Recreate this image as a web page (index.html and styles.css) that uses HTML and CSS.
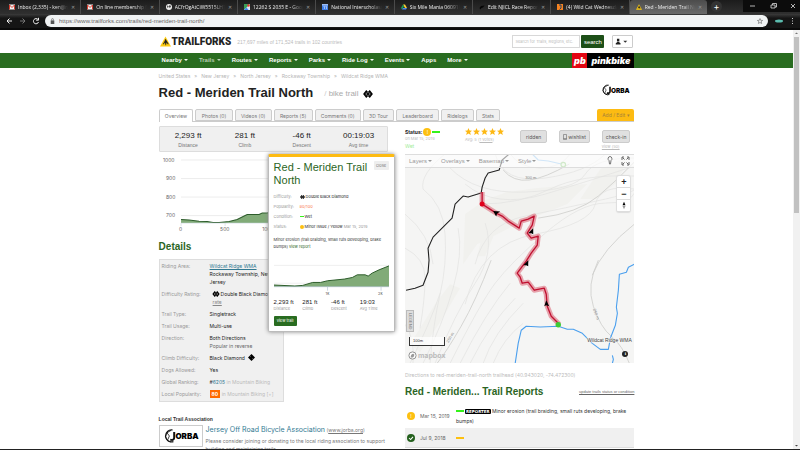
FILE: index.html
```html
<!DOCTYPE html>
<html lang="en">
<head>
<meta charset="utf-8">
<title>Red - Meriden Trail North</title>
<link rel="stylesheet" href="styles.css">
</head>
<body>
<svg class="defs" aria-hidden="true">
  <symbol id="dbl" viewBox="0 0 22 18"><path d="M7 0l4 4 4-4 7 9-7 9-4-4-4 4-7-9z" fill="#000"/><path d="M7 6v6M15 6v6M11 4v3M11 11v3" stroke="#fff" stroke-width="1.3"/></symbol>
  <symbol id="warn" viewBox="0 0 20 20"><path d="M10 1L20 19H0z" fill="#fc1"/><path d="M10 5l-2 5-3 5h2l2-3 1 5h1l1-5 2 3h2l-3-5z" fill="#222"/></symbol>
  <symbol id="mail" viewBox="0 0 12 10"><path d="M0 0h12v10H0z" fill="#f2f2f2"/><path d="M1 10V1l5 5 5-5v9" fill="none" stroke="#d33a2c" stroke-width="2"/></symbol>
  <symbol id="star" viewBox="0 0 20 20"><path d="M10 0l3 7 7 .6-5.300 4.800L16.500 20 10 16l-6.500 4 1.800-7.600L0 7.600 7 7z" fill="#fdb813"/></symbol>
  <symbol id="jorba" viewBox="0 0 90 36"><path d="M24 3A15 15 0 1 0 26 32" fill="none" stroke="#111" stroke-width="3"/><path d="M20 4L10 10 6 20l5 9 9 4M10 10l6 8-5 11" fill="none" stroke="#111" stroke-width="2"/><path d="M28 8v14q0 8-10 5" fill="none" stroke="#111" stroke-width="5"/><text x="31" y="26" class="jorba-text">ORBA</text></symbol>
</svg>

<header class="chrome">
  <div class="tabstrip">
    <div class="btabs">
      <div class="btab"><svg class="fav"><use href="#mail"/></svg><span>Inbox (2,335) - ken@njicl</span><i>✕</i></div>
      <div class="btab"><svg class="fav"><use href="#mail"/></svg><span>On line membership form</span><i>✕</i></div>
      <div class="btab"><svg class="fav" viewBox="0 0 12 12"><circle cx="6" cy="6" r="6" fill="#eee"/><path d="M2 3l3 1v2L3 8M7 2l3 2-2 4-2-2" fill="#333"/></svg><span>ACfrOgAtCiW5515LH1jz</span><i>✕</i></div>
      <div class="btab"><svg class="fav" viewBox="0 0 12 12"><path d="M0 0h12v12H0z" fill="#3a9e56"/><path d="M0 12L12 0v12z" fill="#dfe6ee"/><path d="M0 12l5-5 4 5z" fill="#4285f4"/><circle cx="9" cy="3" r="2.500" fill="#e33"/></svg><span>12262 S 2035 E - Google</span><i>✕</i></div>
      <div class="btab"><svg class="fav" viewBox="0 0 12 12"><path d="M0 0h12v12H0z" fill="#3f7ee8"/><path d="M0 0h12v3H0z" fill="#9dbdf5"/><path d="M3 5h2v5M7 5h2v5" stroke="#fff" fill="none"/></svg><span>National Interscholastic</span><i>✕</i></div>
      <div class="btab"><svg class="fav" viewBox="0 0 12 12"><path d="M4 1h4l4 7H8z" fill="#fc3"/><path d="M4 1l2 3.500L2 11 0 8z" fill="#1a9f5a"/><path d="M4 8h8l-2 3H2z" fill="#4a87ee"/></svg><span>Six Mile Mania 060919</span><i>✕</i></div>
      <div class="btab"><svg class="fav" viewBox="0 0 12 12"><path d="M1 8l3-4 7-1-3 4-3 1-2 3z" fill="#050505"/></svg><span>Edit NJICL Race Report</span><i>✕</i></div>
      <div class="btab"><svg class="fav" viewBox="0 0 12 12"><path d="M0 0h12v12H0z" fill="#f58220"/><path d="M4 2h4v6l-3 3" stroke="#246" stroke-width="2" fill="none"/></svg><span>(4) Wild Cat Wednesday</span><i>✕</i></div>
      <div class="btab active"><svg class="fav"><use href="#warn"/></svg><span>Red - Meriden Trail North</span><i>✕</i></div>
    </div>
    <button class="newtab" aria-label="New tab">+</button>
    <div class="winctl">
      <svg viewBox="0 0 57 12"><path d="M7 6h5M28 5h4v3h-4zM29.500 5V3.500h4v3.500h-1.500M48 4l4 4M52 4l-4 4" fill="none" stroke="#ddd" stroke-width=".8"/></svg>
    </div>
  </div>
  <div class="toolbar">
    <svg class="arrows" viewBox="0 0 45 14"><g fill="none" stroke="#eee"><path d="M12 7H7M9.500 4.500L7 7l2.500 2.500"/><path d="M20 7h5M22.500 4.500L25 7l-2.500 2.500" stroke="#777"/><path d="M38 5.500A2.600 2.600 0 1 0 38.500 8M38.500 3.800V6.200h-2.400"/></g></svg>
    <div class="omni">
      <svg class="lock" viewBox="0 0 8 10"><path d="M1 4h6v6H1z" fill="#555"/><path d="M2.500 4V2.500q0-1.500 1.500-1.500t1.500 1.500V4" fill="none" stroke="#555"/></svg>
      <input class="url" aria-label="Address" value="https://www.trailforks.com/trails/red-meriden-trail-north/">
      <svg class="fave" viewBox="-1 -1 22 22"><path d="M10 1l2.500 6.500 7 .5-5.300 4.500L16 19l-6-3.500L4 19l1.800-6.500L.5 8l7-.5z" fill="none" stroke="#555" stroke-width="2"/></svg>
    </div>
    <svg class="ext" viewBox="0 0 32 14"><ellipse cx="11" cy="7" rx="4" ry="1.500" fill="#5bbcae"/><path d="M24 4h1v1h-1zM24 6.500h1v1h-1zM24 9h1v1h-1z" fill="#ccc"/></svg>
  </div>
</header>

<div class="frame">
<div class="page">
  <div class="wrap head">
    <a class="brand" href="#"><svg><use href="#warn"/></svg><b>TRAILFORKS</b></a>
    <span class="tagline">217,697 miles of 171,524 trails in 102 countries</span>
    <form class="search">
      <input aria-label="Search" placeholder="Search for Trails, Regions, etc.">
      <button type="button">search</button>
    </form>
    <button class="user" aria-label="Account"><svg viewBox="0 0 24 10"><path d="M5 1h3v3.500H5zM3.500 8V6.500l2-1.500h2l2 1.500V8z" fill="#222"/><path d="M13 3.500h5L15.500 6z" fill="#333"/></svg></button>
  </div>

  <nav class="mainnav">
    <div class="wrap">
      <a class="car" href="#">Nearby</a><a class="car dim" href="#">Trails</a><a class="car" href="#">Routes</a><a class="car" href="#">Reports</a><a class="car" href="#">Parks</a><a class="car" href="#">Ride Log</a><a class="car" href="#">Events</a><a href="#">Apps</a><a class="car" href="#">More</a>
      <span class="pink"><b class="pb">pb</b><b class="pinkbike">pinkbike</b></span>
    </div>
  </nav>

  <main class="wrap">
    <div class="crumbs"><a href="#">United States</a><i>»</i><a href="#">New Jersey</a><i>»</i><a href="#">North Jersey</a><i>»</i><a href="#">Rockaway Township</a><i>»</i><a href="#">Wildcat Ridge WMA</a></div>
    <div class="titlebar">
      <h1>Red - Meriden Trail North</h1><small><i>/</i> bike trail</small><svg class="diamond"><use href="#dbl"/></svg>
      <svg class="assoc-logo"><use href="#jorba"/></svg>
    </div>
    <div class="tabs">
      <a class="on" href="#">Overview</a><a href="#">Photos (0)</a><a href="#">Videos (0)</a><a href="#">Reports (5)</a><a href="#">Comments (0)</a><a href="#">3D Tour</a><a href="#">Leaderboard</a><a href="#">Ridelogs</a><a href="#">Stats</a>
      <button class="edit">Add / Edit ▾</button>
    </div>

    <div class="cols">
      <section class="left">
        <div class="stats">
          <div><b>2,293 ft</b>Distance</div><div><b>281 ft</b>Climb</div><div><b>-46 ft</b>Descent</div><div><b>00:19:03</b>Avg time</div>
        </div>
        <svg class="chart" viewBox="0 0 229 80">
          <path d="M22 8h207M22 26.500h207M22 45h207M22 63.500h207" stroke="#e4e4e4" stroke-width=".7"/>
          <path d="M22 67.500L30 68l10 1.200 8 .2 6 1h6l10-1 8-2 6-3 4-2h12l3-1.500h5l3-1h8l20-5 20-6 40-10v32H22z" fill="#81ab78"/>
          <path d="M22 67.500L30 68l10 1.200 8 .2 6 1h6l10-1 8-2 6-3 4-2h12l3-1.500h5l3-1h8l20-5 20-6 40-10" fill="none" stroke="#2d5c2b"/>
          <path d="M22 71h207M22 71v3M66 71v3M110 71v3" stroke="#cdd6e0" stroke-width=".6" fill="none"/>
          <g class="axis"><text x="4" y="10">1000</text><text x="7" y="28">900</text><text x="7" y="47">800</text><text x="7" y="65">700</text><text x="20" y="79">0</text><text x="61" y="79">500</text><text x="103" y="79">1000</text></g>
        </svg>

        <h2>Details</h2>
        <dl class="details">
          <dt>Riding Area:</dt><dd><a class="u" href="#">Wildcat Ridge WMA</a><br>Rockaway Township, New Jersey</dd>
          <dt>Difficulty Rating:</dt><dd><svg class="ico"><use href="#dbl"/></svg>Double Black Diamond<br><a class="rate" href="#">rate</a></dd>
          <dt>Trail Type:</dt><dd>Singletrack</dd>
          <dt>Trail Usage:</dt><dd>Multi-use</dd>
          <dt>Direction:</dt><dd>Both Directions<br><span class="soft">Popular in reverse</span></dd>
          <dt>Climb Difficulty:</dt><dd>Black Diamond <svg class="ico one" viewBox="0 0 14 14"><path d="M7 0l7 7-7 7-7-7z"/><path d="M5 5h1M8 9h1" stroke="#fff"/></svg></dd>
          <dt>Dogs Allowed:</dt><dd>Yes</dd>
          <dt>Global Ranking:</dt><dd>#<a class="rank" href="#">6205</a> <span class="faint">in Mountain Biking</span></dd>
          <dt>Local Popularity:</dt><dd><b class="pop">80</b> <span class="faint">in Mountain Biking [+]</span></dd>
        </dl>

        <h3>Local Trail Association</h3>
        <div class="assoc">
          <div class="card"><svg><use href="#jorba"/></svg></div>
          <div><a class="name" href="#">Jersey Off Road Bicycle Association</a> <span class="site">(<a href="#">www.jorba.org</a>)</span>
          <p>Please consider joining or donating to the local riding association to support building and maintaining trails.</p></div>
        </div>

        <aside class="popup">
          <button class="close">close</button>
          <h2>Red - Meriden Trail North</h2>
          <dl>
            <dt>Difficulty:</dt><dd><svg class="ico"><use href="#dbl"/></svg>Double Black Diamond</dd>
            <dt>Popularity:</dt><dd class="orange">80/100</dd>
            <dt>Condition:</dt><dd><i class="bar green"></i>Wet</dd>
            <dt>Status:</dt><dd><i class="dot"></i>Minor Issue / Yellow <span>Mar 15, 2019</span></dd>
          </dl>
          <p>Minor erosion (trail braiding, small ruts developing, brake bumps) <a href="#">view report</a></p>
          <svg class="mini" viewBox="0 0 116 42">
            <path d="M0 11.500h116M0 29.500h116" stroke="#e8e8e8" stroke-width=".7"/>
            <path d="M0 31.300L21 32.300 29 31.700 39 28.700H47L54 27 71 25.300 79 23.700 84 21H92L95 22.300 99 19.300 106 16 116 12V33H0z" fill="#81ab78"/>
            <path d="M0 31.300L21 32.300 29 31.700 39 28.700H47L54 27 71 25.300 79 23.700 84 21H92L95 22.300 99 19.300 106 16 116 12" fill="none" stroke="#2d5c2b"/>
            <path d="M0 33h116M54 33v4M108 33v4" stroke="#a9bccd" stroke-width=".6" fill="none"/>
            <text x="52" y="41">1k</text><text x="105" y="41">2k</text>
          </svg>
          <div class="pstats"><div><b>2,293 ft</b>Distance</div><div><b>281 ft</b>Climb</div><div><b>-46 ft</b>Descent</div><div><b>19:03</b>Avg Time</div></div>
          <button class="view">view trail</button>
        </aside>
      </section>

      <section class="right">
        <div class="status">
          <div class="st"><div class="sline"><b>Status:</b><i class="dot">!</i><i class="bar green"></i></div><span>on Mar 15, 2019</span><em>Wet</em></div>
          <div class="rating"><div class="stars"><svg><use href="#star"/></svg><svg><use href="#star"/></svg><svg><use href="#star"/></svg><svg><use href="#star"/></svg><svg><use href="#star"/></svg></div><span>Avg: 5 (<a href="#">1 votes</a>)</span></div>
          <div class="acts">
            <button>ridden</button>
            <button><svg viewBox="0 0 8 12"><path d="M1 1h6v10H1zM1 9h6" fill="none" stroke="#555"/></svg>wishlist</button>
            <div><button>check-in</button><a href="#">view (50)</a></div>
          </div>
        </div>

        <div class="map">
          <svg class="canvas" viewBox="0 0 229 209">
            <rect width="229" height="209" fill="#f5f5f4"/>
            <g fill="#f1f1ee"><path d="M60 60l20-14 22-8 30-4 50-4-20 20-50 20-40 20-14 20zM175 45l20-30 28-13-10 25-22 18zM5 190l25-40 15-20 10 4-20 34-20 30zM78 78l12 0-10 24-8 0z"/></g>
            <g fill="none" stroke="#e3e3e1" stroke-width=".7">
              <path d="M40 0Q15 20 18 35q20 15 22 45t-5 60-10 69"/>
              <path d="M45 14Q70 40 120 38T180 20 229 4M60 30q30 25 80 10T229 12M75 50q40 0 70-15T229 22"/>
              <path d="M70 110q10-40 50-48T200 45 229 30M60 150q15-60 70-70t60-30 39-15M45 209q30-60 45-80t50-50 60-30 29-10"/>
              <path d="M55 209q25-50 50-80M65 209q20-40 45-65M78 209q10-30 40-60M88 209q10-25 30-40M30 209q20-50 40-80t10-60M18 209q20-40 30-75t5-60M5 209q20-40 30-70"/>
              <path d="M105 0q10 14 30 14t30-14M90 0q8 30 50 24T200 0M0 94q20 10 20 30t-5 50M0 60q25 20 28 50M0 170q10 14 8 39"/>
            </g>
            <g fill="none" stroke="#cdcdcb" stroke-width=".8">
              <path d="M98 16q10 12 26 10t40-16M133 64q40-5 60-22t36-34M187 121q10-26 42-51M193 106q-12 25-5 46t18 30 18 27M86 106q-15 40-30 66T32 209"/>
            </g>
            <g class="contour"><text x="120" y="25">300 m</text><text transform="rotate(-60 45 186)" x="42" y="186">250 m</text><text transform="rotate(70 188 156)" x="187" y="156">250 m</text></g>
            <g fill="none" stroke="#4a9fee" stroke-width="1.100" stroke-linejoin="round">
              <path d="M110 209l3-20 3-13 5-4 14 .7 18-.7 9 3h6l9 4 10 10 8 6h8l2-11 5-13 2-12-1-6 2-17 1-16 7-2 2-5 6-3M207 201l1 4-1 4"/>
              <path d="M127 0l6 6 10 1 13 3" stroke="#8cc0ee"/>
            </g>
            <path d="M104 0l-7 6-3 10-11 3-3 5-3 9-1 6-13 4-5-1-8 8-3 14-19 19-5 11 1 12-1 12-5 13-8 3-9 2" fill="none" stroke="#222" stroke-width="1.100" stroke-linejoin="round"/>
            <path d="M77 38v12l14 9 6 3 6 5 11 7 2-7 7-2 6-3-2 9-5 8 4 5 7-2-1 9-6 8-5 8-9 12 3 4 2 6 6-1 6 8 10-2 2 6 1 12 4 10 8 8" fill="none" stroke="#dc6b7a" stroke-opacity=".6" stroke-width="5" stroke-linejoin="round"/>
            <path d="M77 38v12l14 9 6 3 6 5 11 7 2-7 7-2 6-3-2 9-5 8 4 5 7-2-1 9-6 8-5 8-9 12 3 4 2 6 6-1 6 8 10-2 2 6 1 12 4 10 8 8" fill="none" stroke="#c01030" stroke-width="1.300" stroke-linejoin="round"/>
            <path d="M88 57l7 .5-3 2-1 3zM123 79l5-5 0 6-2-1zM118 111l5-5 0 6-2-1zM139 152l2-6 3 6-3-1z"/>
            <circle cx="77" cy="50" r="2.500" fill="#e0001b"/><circle cx="153" cy="170.500" r="2.700" fill="#3ecb35"/>
            <circle cx="158" cy="10.600" r="2.300" fill="#e6f5df" stroke="#8cc77c" stroke-width="1.200"/>
            <text class="place" x="182" y="188">Wildcat Ridge WMA</text>
          </svg>
          <div class="maptools"><a href="#">Layers</a><a href="#">Overlays</a><a href="#">Basemap</a><a href="#">Style</a>
            <svg viewBox="0 0 24 12"><path d="M4 1.500a2.200 2.200 0 0 1 1 4L4.500 9h-1L3 5.500a2.200 2.200 0 0 1 1-4z" fill="none" stroke="#777"/><path d="M16 5V2h2M23 5V2h-2M16 7v3h2M23 7v3h-2M16.500 2.500l2 2M22.500 2.500l-2 2M16.500 9.500l2-2M22.500 9.500l-2-2" fill="none" stroke="#666"/></svg></div>
          <div class="zoom"><button aria-label="Zoom in">+</button><button aria-label="Zoom out">−</button><button aria-label="North"><svg viewBox="0 0 8 12"><path d="M4 1l2 4.500H2z"/><path d="M4 11l2-4.500H2z" fill="#999"/></svg></button></div>
          <span class="legend">LEGEND</span>
          <span class="scale">100m</span>
          <span class="mapbox"><svg viewBox="0 0 10 10"><circle cx="5" cy="5" r="4" fill="#fff" stroke="#888"/><path d="M3 7q0-4 3-4 2 1 .5 3T3 7z" fill="#999"/></svg>mapbox</span>
          <button class="info" aria-label="Map information">i</button>
        </div>

        <p class="dir">Directions to red-meriden-trail-north trailhead (40.943020, -74.472300)</p>
        <div class="rephead"><h2>Red - Meriden... Trail Reports</h2><a href="#">update trails status or condition</a></div>
        <table class="reports">
          <tr><td><i class="dot">!</i></td><td>Mar 15, 2019</td><td><i class="bar green"></i><b class="badge">REPORTER</b> Minor erosion (trail braiding, small ruts developing, brake bumps)</td></tr>
          <tr><td><svg viewBox="0 0 10 10"><circle cx="5" cy="5" r="5" fill="#24601d"/><path d="M2.500 5l2 2 3-3.500" fill="none" stroke="#fff" stroke-width="1.300"/></svg></td><td>Jul 9, 2018</td><td><i class="bar yellow"></i></td></tr>
        </table>
      </section>
    </div>
  </main>
</div>
<div class="scroll"><svg viewBox="0 0 7 7"><path d="M2 4l1.500-1.500L5 4z" fill="#777"/></svg><i></i><svg class="down" viewBox="0 0 7 7"><path d="M2 3l1.500 1.500L5 3z" fill="#444"/></svg></div>
</div>
</body>
</html>
```
FILE: styles.css
```css
* { box-sizing: border-box; }
body {
  margin: 0; height: 100vh; overflow: hidden; display: flex; flex-direction: column;
  font: 5px/8px Inter, "Liberation Sans", sans-serif; color: #333; background: #fff;
  border-bottom: 1px solid #222;
}
a { color: inherit; text-decoration: none; }
i, em { font-style: normal; }
button, input { font: inherit; color: inherit; margin: 0; padding: 0; border: 0; background: none; }
h1, h2, h3, p, dl, dd { margin: 0; }
svg { display: block; flex: none; }
.defs { position: absolute; width: 0; height: 0; }
.jorba-text { font: 900 20px Inter, sans-serif; }

/* Browser window */
.chrome { flex: none; background: #1b1b1b; color: #eee; border-bottom: 2px solid #0a0a0a; }
.tabstrip { display: flex; height: 14px; background: linear-gradient(#1c1c1c, #303030); }
.btabs { flex: 1; display: flex; padding-left: 3px; min-width: 0; }
.btab { flex: 1 1 0; min-width: 0; display: flex; align-items: center; gap: 3px; padding: 0 5px 0 6px; border-right: 1px solid #4a4a4a; font-family: "Open Sans", sans-serif; }
.btab span { flex: 1; white-space: nowrap; overflow: hidden; mask-image: linear-gradient(90deg, #000 75%, transparent); }
.btab i { font-size: 5px; color: #999; }
.btab.active { background: linear-gradient(#4c4c4c, #6a6a6a); border-radius: 3px 3px 0 0; border: 0; }
.fav { width: 6px; height: 6px; }
.newtab { width: 11px; height: 11px; margin: 1px 21px 0 4px; border-radius: 50%; background: #333; color: #fff; font-size: 9px; line-height: 10px; }
.winctl { width: 57px; background: #0c0c0c; height: 12px; }
.toolbar { display: flex; align-items: center; height: 14px; background: linear-gradient(#3b3b3b, #151515 30%); }
.arrows { width: 45px; height: 14px; }
.omni { flex: 1; height: 12px; border-radius: 6px; background: #f1f3f4; display: flex; align-items: center; gap: 4px; padding: 0 5px; color: #666; }
.lock { width: 5px; height: 6px; }
.url { flex: 1; height: 10px; font: 6px/10px "Liberation Sans", sans-serif; }
.fave { width: 6px; height: 6px; }
.ext { width: 32px; height: 14px; }

/* Site frame */
.frame { flex: 1; min-height: 0; display: flex; }
.page { flex: 1; overflow: hidden; }
.scroll { width: 7px; background: #f1f1f1; display: flex; flex-direction: column; }
.scroll svg { width: 7px; height: 7px; }
.scroll i { display: block; height: 42%; margin: 0 1px; background: #c1c1c1; }
.scroll .down { margin-top: auto; }
.wrap { width: 60%; min-width: 475px; margin: 0 auto; }

.head { height: 23px; display: flex; align-items: center; }
.brand { display: flex; align-items: center; gap: 1px; padding-left: 1px; color: #222; }
.brand svg { width: 11px; height: 11px; }
.brand b { font: 900 10px/14px Roboto, "Liberation Sans", sans-serif; }
.tagline { color: #bbb; font: 5px "Liberation Sans", sans-serif; margin-left: 6px; flex: 1; }
.search { display: flex; gap: 1px; }
.search input { width: 68px; height: 13px; border: 1px solid #d8d8d8; padding: 0 2px; font: 4px Inter, sans-serif; }
.search input::placeholder { color: #bbb; }
.search button { width: 23px; height: 13px; background: #1d4f18; color: #fff; border-radius: 1px; font: 6px/12px "Liberation Sans", sans-serif; }
.user { width: 21px; height: 13px; margin: 0 1px 0 8px; border: 1px solid #ccc; border-radius: 1px; }
.user svg { width: 100%; height: 10px; }

.mainnav { background: #296c20; color: #fff; font: bold 6px/15px "Liberation Sans", sans-serif; }
.mainnav .wrap { display: flex; gap: 11px; padding-left: 3px; }
.mainnav .dim { color: #b8cdb4; }
.car::after { content: ""; display: inline-block; border: 2px solid transparent; border-top-color: currentColor; border-bottom: 0; margin-left: 2px; vertical-align: 1px; }
.pink { margin-left: auto; display: flex; font: italic 900 9px/15px Inter, sans-serif; }
.pb { width: 15px; background: #e30613; text-align: center; }
.pinkbike { width: 47px; background: #000; text-align: center; }

.crumbs { color: #b5b5b5; padding-top: 4px; display: flex; gap: 4px; }
.titlebar { display: flex; align-items: center; height: 22px; margin-top: 2px; padding-bottom: 1px; }
h1 { font: bold 13px/16px "Liberation Sans", sans-serif; color: #222; }
.titlebar small { font: 8px/16px "Liberation Sans", sans-serif; color: #aaa; margin: 2px 5px 0 11px; }
.titlebar small i { color: #ccc; }
.diamond { width: 10px; height: 8px; margin-top: 2px; }
.assoc-logo { width: 29px; height: 12px; margin: 0 4px 6px auto; }

.tabs { display: flex; gap: 2px; margin-top: 5px; border-bottom: 1px solid #ccc; height: 13px; line-height: 11px; color: #777; text-align: center; }
.tabs a { flex-grow: 1; padding: 1px 5px 0; background: #f0f0f0; border: 1px solid #ccc; border-radius: 2px 2px 0 0; height: 12px; white-space: nowrap; }
.tabs .on { background: #fff; height: 13px; border-bottom: 0; }
.edit { margin-left: 20%; width: 37px; height: 12px; background: #fdbb12; color: #a8843a; border-radius: 2px 2px 0 0; }

.cols { display: grid; grid-template-columns: 1fr 1fr; gap: 17px; margin-top: 4px; }
.left { position: relative; min-width: 0; }
.stats { display: grid; grid-template-columns: repeat(4, 1fr); height: 26px; padding-top: 4px; background: #f0f0f0; border: 1px solid #ddd; border-radius: 1px; text-align: center; font-family: "Liberation Sans", sans-serif; color: #777; }
.stats b { display: block; font: 8px/10px "Liberation Sans", sans-serif; color: #222; }
.chart { width: 100%; height: auto; }
.axis { font: 5px Inter, sans-serif; fill: #666; }
h2 { font: bold 10px/12px "Liberation Sans", sans-serif; color: #2b6524; }
.left > h2 { margin: 9px 0 6px; }
.details { display: grid; grid-template-columns: 48px 72px; row-gap: 4px; align-content: start; width: 125px; padding: 2px 1px 3px 2px; background: #f0f0f0; border: 1px solid #ddd; color: #222; }
.details dt { color: #999; }
.u { color: #327a92; text-decoration: underline; }
.details dd { min-width: 0; }
.details dd:nth-of-type(n+2) { white-space: nowrap; }
.ico { display: inline-block; width: 8px; height: 6px; margin: 0 1px 0 2px; vertical-align: -1px; }
.ico.one { width: 7px; height: 7px; }
.rate { text-decoration: underline; color: #888; margin-left: 3px; }
.soft { color: #666; }
.rank { color: #327a92; }
.faint { color: #bbb; }
.pop { display: inline-block; background: #ff6a00; color: #fff; padding: 0 2px; }
h3 { font: bold 5px/8px "Liberation Sans", sans-serif; color: #333; margin-top: 13px; }
.assoc { display: flex; gap: 3px; margin-top: 2px; color: #777; }
.card { flex: none; width: 44px; height: 22px; border: 1px solid #ccc; padding: 2px 3px; }
.card svg { width: 36px; height: 16px; }
.name { font: 7px/10px Inter, sans-serif; color: #327a92; }
.site a { text-decoration: underline; }
.assoc p { margin-top: 2px; line-height: 8px; }

/* Trail summary card over the left column */
.popup { position: absolute; left: 109px; top: 28px; width: 127px; height: 178px; padding: 4px 5px; background: #fff; border: 1px solid #bbb; border-top: 3px solid #fdbb12; border-radius: 2px; box-shadow: 0 0 4px #888; font: 4px/8px Inter, sans-serif; }
.popup h2 { font: 11px/13px "Liberation Sans", sans-serif; }
.close { float: right; width: 15px; height: 9px; border-radius: 1px; background: #eee; color: #777; line-height: 8px; }
.popup dl { display: grid; grid-template-columns: 26px 1fr; row-gap: 2px; margin-top: 6px; color: #222; }
.popup dt, .popup dd span { color: #999; }
.popup .ico { width: 5px; height: 4px; margin: 0 1px 0 0; }
.popup .orange { color: #f97b50; }
.popup p { margin-top: 5px; line-height: 7px; color: #333; }
.popup p a { color: #2b6524; }
.bar { display: inline-block; width: 8px; height: 2px; background: #fdc010; vertical-align: 1px; margin-right: 1px; }
.green { background: #35f21a; }
.popup .bar { width: 4px; height: 1px; }
.dot { display: inline-block; width: 8px; height: 8px; border-radius: 50%; background: #fdc010; color: #fff; text-align: center; line-height: 8px; }
.popup .dot { width: 4px; height: 4px; margin-right: 1px; vertical-align: -1px; }
.mini { width: 100%; height: auto; margin-top: 4px; font: 4px Inter, sans-serif; fill: #555; }
.pstats { display: grid; grid-template-columns: repeat(4, 1fr); color: #999; line-height: 6px; margin-top: 2px; }
.pstats b { display: block; font: 6px/8px "Liberation Sans", sans-serif; color: #222; }
.view { width: 23px; height: 10px; margin-top: 4px; background: #296c20; color: #fff; border-radius: 1px; }

.status { display: flex; height: 28px; padding-top: 1px; font: 4px/6px Inter, sans-serif; color: #bbb; }
.st { width: 60px; display: flex; flex-direction: column; }
.sline { display: flex; align-items: center; gap: 1px; height: 9px; color: #222; font-size: 5px; }
.status em { color: #a4ec9a; font-size: 5px; line-height: 8px; }
.stars { display: flex; gap: 1px; height: 9px; align-items: center; }
.stars svg { width: 7px; height: 7px; }
.rating span { display: block; margin-top: 1px; }
.rating a, .acts a { text-decoration: underline; }
.acts { margin-left: auto; display: flex; gap: 12px; padding: 3px 4px 0 0; }
.acts button { min-width: 27px; height: 13px; padding: 0 3px; border: 1px solid #ccc; border-radius: 2px; background: #e0e0e0; color: #555; font: 5px Inter, sans-serif; display: flex; align-items: center; justify-content: center; gap: 1px; }
.acts button svg { width: 4px; height: 6px; }
.acts a { display: block; line-height: 7px; }

.map { position: relative; font-family: "Liberation Sans", sans-serif; }
.canvas { width: 100%; height: auto; }
.contour { font: 4px "Liberation Sans", sans-serif; fill: #888; }
.place { font: 5px "Liberation Sans", sans-serif; fill: #444; stroke: #f5f5f4; stroke-width: 1px; paint-order: stroke; }
.maptools { position: absolute; inset: 0 0 auto; height: 14px; display: flex; align-items: center; gap: 9px; padding: 0 4px; background: rgba(255,255,255,.6); border: 1px solid #ddd; border-width: 1px 0; color: #999; font-size: 6px; }
.maptools a::after { content: ""; display: inline-block; border: 2px solid transparent; border-top-color: #999; border-bottom: 0; margin-left: 1px; vertical-align: 1px; }
.maptools svg { width: 24px; height: 12px; margin-left: auto; }
.zoom { position: absolute; right: 4px; top: 22px; width: 13px; background: #fff; border-radius: 2px; box-shadow: 0 0 1px 1px #ddd; }
.zoom button { display: block; width: 13px; height: 12px; font: bold 9px/12px "Liberation Sans", sans-serif; color: #222; border-bottom: 1px solid #ddd; }
.zoom svg { width: 6px; height: 9px; margin: 0 auto; }
.legend { position: absolute; left: 1px; top: 156px; height: 22px; width: 8px; background: #ddd; border: 1px solid #bbb; font-size: 4px; line-height: 6px; writing-mode: vertical-rl; text-align: center; color: #777; }
.scale { position: absolute; left: 4px; bottom: 17px; width: 36px; height: 9px; border: 1px solid #333; border-top: 0; background: rgba(255,255,255,.7); font-size: 4px; padding-left: 3px; }
.mapbox { position: absolute; left: 3px; bottom: 3px; display: flex; gap: 1px; align-items: center; font: bold 7px/9px Inter, sans-serif; color: #bbb; }
.mapbox svg { width: 9px; height: 9px; }
.info { position: absolute; right: 6px; bottom: 6px; width: 6px; height: 6px; border-radius: 50%; background: #222; color: #fff; font: bold 5px/6px "Liberation Serif", serif; }

.dir { color: #bbb; margin-top: 8px; }
.rephead { display: flex; justify-content: space-between; align-items: center; margin-top: 7px; }
.rephead a { font: 4px/8px "Liberation Sans", sans-serif; text-decoration: underline; color: #666; }
.reports { width: 100%; border-collapse: collapse; margin-top: 7px; color: #333; }
.reports td { padding: 1px 0 2px; vertical-align: middle; line-height: 10px; }
.reports tr + tr { background: #f0f0f0; border-bottom: 1px solid #ddd; height: 19px; }
.reports tr + tr td { padding: 0; }
.reports td:first-child { width: 15px; padding-left: 2px; }
.reports td:nth-child(2) { width: 36px; color: #666; }
.reports td:first-child .dot { display: block; }
.reports svg { width: 8px; height: 8px; }
.reports tr + tr td:first-child { padding-left: 2px; }
.badge { background: #000; color: #fff; font: bold 4px/5px "DejaVu Sans", sans-serif; display: inline-block; padding: 0 1px; border-radius: 1px; }
```
